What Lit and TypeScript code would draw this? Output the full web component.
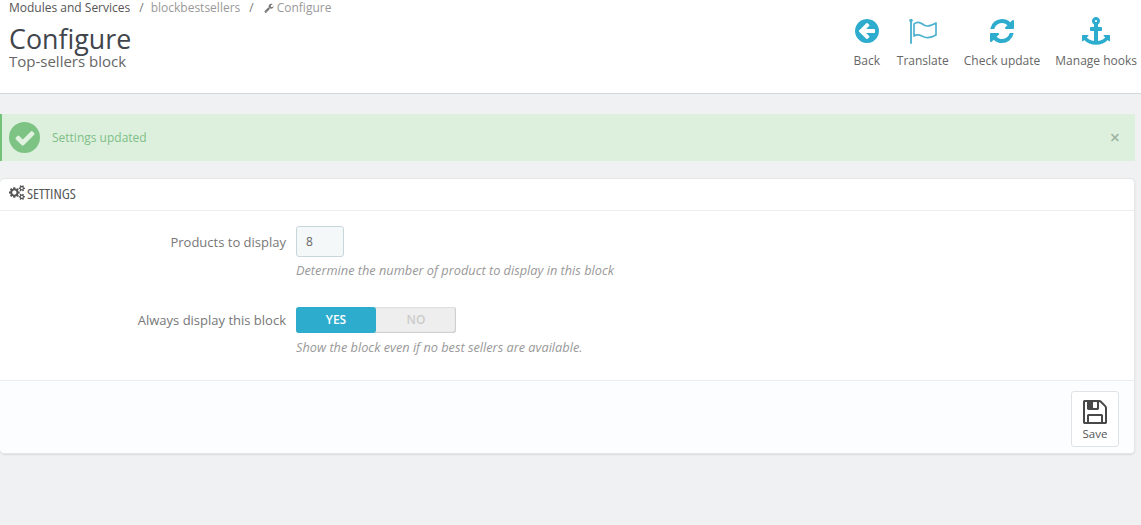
import { LitElement, html, css, svg } from "lit";
import { customElement } from "lit/decorators.js";

const ic = (d: string, cls: string, vb = "0 0 1792 1792") =>
  html`<svg class=${cls} viewBox=${vb} aria-hidden="true">${svg`<path fill="currentColor" d=${d}></path>`}</svg>`;

const BACK = "M1408 960v-128q0-26-19-45t-45-19h-502l189-189q19-19 19-45t-19-45l-91-91q-18-18-45-18t-45 18l-362 362-91 91q-18 18-18 45t18 45l91 91 362 362q18 18 45 18t45-18l91-91q18-18 18-45t-18-45l-189-189h502q26 0 45-19t19-45zm256-64q0 209-103 385.500t-279.500 279.500-385.500 103-385.500-103-279.500-279.500-103-385.500 103-385.500 279.500-279.500 385.500-103 385.500 103 279.500 279.500 103 385.500z";
const REFRESH = "M1639 1056q0 5-1 7-64 268-268 434.500t-478 166.500q-146 0-282.500-55t-243.500-157l-129 129q-19 19-45 19t-45-19-19-45v-448q0-26 19-45t45-19h448q26 0 45 19t19 45-19 45l-137 137q71 66 161 102t187 36q134 0 250-65t186-179q11-17 53-117 8-23 30-23h192q13 0 22.500 9.500t9.500 22.500zm25-800v448q0 26-19 45t-45 19h-448q-26 0-45-19t-19-45 19-45l138-138q-148-137-349-137-134 0-250 65t-186 179q-11 17-53 117-8 23-30 23h-199q-13 0-22.500-9.500t-9.500-22.500v-7q65-268 270-434.500t480-166.500q146 0 284 55.500t245 156.500l130-129q19-19 45-19t45 19 19 45z";
const ANCHOR = "M960 256q0-26-19-45t-45-19-45 19-19 45 19 45 45 19 45-19 19-45zm832 928v352q0 22-20 30-8 2-12 2-12 0-23-9l-93-93q-119 143-318.500 226.500t-429.500 83.500-429.500-83.500-318.500-226.500l-93 93q-9 9-23 9-4 0-12-2-20-8-20-30v-352q0-14 9-23t23-9h352q22 0 30 20 8 19-7 35l-100 100q67 91 189.500 153.500t271.500 82.500v-647h-192q-26 0-45-19t-19-45v-128q0-26 19-45t45-19h192v-163q-58-34-93-92.500t-35-128.500q0-106 75-181t181-75 181 75 75 181q0 70-35 128.500t-93 92.500v163h192q26 0 45 19t19 45v128q0 26-19 45t-45 19h-192v647q149-20 271.500-82.500t189.500-153.500l-100-100q-15-16-7-35 8-20 30-20h352q14 0 23 9t9 23z";
const SAVE = "M512 1536h768v-384h-768v384zm896 0h128v-896q0-14-10-38.500t-20-34.500l-281-281q-10-10-34-20t-39-10v416q0 40-28 68t-68 28h-576q-40 0-68-28t-28-68v-416h-128v1280h128v-416q0-40 28-68t68-28h832q40 0 68 28t28 68v416zm-384-928v-320q0-13-9.500-22.500t-22.500-9.500h-192q-13 0-22.500 9.500t-9.500 22.500v320q0 13 9.500 22.500t22.500 9.500h192q13 0 22.500-9.500t9.500-22.500zm640 32v928q0 40-28 68t-68 28h-1344q-40 0-68-28t-28-68v-1344q0-40 28-68t68-28h928q40 0 88 20t76 48l280 280q28 28 48 76t20 88z";
const WRENCH = "M448 1472q0-26-19-45t-45-19-45 19-19 45 19 45 45 19 45-19 19-45zm644-420l-682 682q-37 37-90 37-52 0-91-37l-106-108q-38-36-38-90 0-53 38-91l681-681q39 98 114.500 173.500t173.500 114.500zm634-435q0 39-23 106-47 134-164.500 217.500t-258.500 83.500q-185 0-316.500-131.500t-131.500-316.500 131.500-316.500 316.500-131.500q58 0 121.500 16.500t107.500 46.500q16 11 16 28t-16 28l-293 169v224l193 107q5-3 79-48.500t135.500-81 70.500-35.500q15 0 23.500 10t8.500 25z";
const CHECK = "M1671 566q0 40-28 68l-724 724-136 136q-28 28-68 28t-68-28l-136-136-362-362q-28-28-28-68t28-68l136-136q28-28 68-28t68 28l294 295 656-657q28-28 68-28t68 28l136 136q28 28 28 68z";
const COGS = "M896 896q0-106-75-181t-181-75-181 75-75 181 75 181 181 75 181-75 75-181zm768 512q0-52-38-90t-90-38-90 38-38 90q0 53 37.500 90.500t90.500 37.500 90.500-37.500 37.500-90.500zm0-1024q0-52-38-90t-90-38-90 38-38 90q0 53 37.500 90.500t90.500 37.500 90.500-37.500 37.500-90.500zm-384 421v185q0 10-7 19.500t-16 10.500l-155 24q-11 35-32 76 34 48 90 115 7 11 7 20 0 12-7 19-23 30-82.500 89.500t-78.500 59.500q-11 0-21-7l-115-90q-37 19-77 31-11 108-23 155-7 24-30 24h-186q-11 0-20-7.500t-10-17.500l-23-153q-34-10-75-31l-118 89q-7 7-20 7-11 0-21-8-144-133-144-160 0-9 7-19 10-14 41-53t47-61q-23-44-35-82l-152-24q-10-1-17-9.500t-7-19.500v-185q0-10 7-19.500t16-10.500l155-24q11-35 32-76-34-48-90-115-7-11-7-20 0-12 7-20 22-30 82-89t79-59q11 0 21 7l115 90q34-18 77-32 11-108 23-154 7-24 30-24h186q11 0 20 7.500t10 17.500l23 153q34 10 75 31l118-89q8-7 20-7 11 0 21 8 144 133 144 160 0 8-7 19-12 16-42 54t-45 60q23 48 34 82l152 23q10 2 17 10.500t7 19.500zm640 533v140q0 16-149 31-12 27-30 52 51 113 51 138 0 4-4 7-122 71-124 71-8 0-46-47t-52-68q-20 2-30 2t-30-2q-14 21-52 68t-46 47q-2 0-124-71-4-3-4-7 0-25 51-138-18-25-30-52-149-15-149-31v-140q0-16 149-31 13-29 30-52-51-113-51-138 0-4 4-7 4-2 35-20t59-34 30-16q8 0 46 46.500t52 67.500q20-2 30-2t30 2q51-71 92-112l6-2q4 0 124 70 4 3 4 7 0 25-51 138 17 23 30 52 149 15 149 31zm0-1024v140q0 16-149 31-12 27-30 52 51 113 51 138 0 4-4 7-122 71-124 71-8 0-46-47t-52-68q-20 2-30 2t-30-2q-14 21-52 68t-46 47q-2 0-124-71-4-3-4-7 0-25 51-138-18-25-30-52-149-15-149-31v-140q0-16 149-31 13-29 30-52-51-113-51-138 0-4 4-7 4-2 35-20t59-34 30-16q8 0 46 46.500t52 67.500q20-2 30-2t30 2q51-71 92-112l6-2q4 0 124 70 4 3 4 7 0 25-51 138 17 23 30 52 149 15 149 31z";

const flag = html`<svg class="tool-icon flag" viewBox="0 0 28 28" aria-hidden="true">
  <circle cx="2" cy="3.500" r="1.800" fill="currentColor"></circle>
  <path d="M2 4v22" fill="none" stroke="currentColor" stroke-width="1.900" stroke-linecap="round"></path>
  <path d="M5 7C9 4 12 6 15 8S22 9 27 6V18C22 21 18 21 15 20S9 16 5 19Z" fill="none" stroke="currentColor" stroke-width="1.700" stroke-linejoin="round"></path>
</svg>`;

@customElement("app-root")
export class AppRoot extends LitElement {
  static styles = css`
    :host {
      display: block;
      height: 525px;
      overflow: hidden;
      background: #eff1f2;
      font-family: "Open Sans", "Liberation Sans", sans-serif;
      font-size: 12px;
      color: #555;
    }
    .head {
      height: 93px;
      background: #fff;
      border-bottom: 1px solid #d3d8db;
      display: flex;
      justify-content: space-between;
      padding-left: 9px;
    }
    .crumbs {
      display: flex;
      align-items: center;
      height: 15px;
      font-size: 12px;
      line-height: 15px;
      color: #555;
    }
    .crumbs .sep { margin: 0 9px; color: #777; }
    .crumbs .sep.first { margin-right: 7px; }
    .crumbs .soft { color: #999; }
    .wrench { width: 10px; height: 10px; margin-right: 3px; color: #777; margin-left: 1px; }
    h1 {
      margin: 9px 0 0;
      font-size: 26.800px;
      line-height: 30px;
      font-weight: 400;
      color: #41454c;
    }
    .sub { font-size: 15px; line-height: 17px; margin-top: -1px; color: #666; }
    .tools {
      display: flex;
      padding-top: 17px;
      padding-right: 4px;
    }
    .tool {
      display: flex;
      flex-direction: column;
      align-items: center;
      margin-left: 15px;
      color: #666;
    }
    .tool:first-child { margin-left: 0; margin-right: 1px; }
    .tool span { font-size: 12px; line-height: 16px; margin-top: 8px; white-space: nowrap; }
    .tool-icon { display: block; width: 28px; height: 28px; color: #2eacce; }
    .flag { color: #4fb3cf; }
    .alert {
      margin: 20px 6px 0 0;
      height: 47px;
      box-sizing: border-box;
      background: #ddf0de;
      border-left: 2px solid #72c279;
      display: flex;
      align-items: center;
      color: #7fbf86;
      font-size: 12px;
    }
    .ok {
      width: 31px;
      height: 31px;
      margin-left: 7px;
      margin-right: 12px;
      border-radius: 50%;
      background: #7dc384;
      color: #dff3e0;
      display: flex;
      align-items: center;
      justify-content: center;
      flex: none;
    }
    .ok svg { width: 22px; height: 22px; }
    .msg { flex: 1; }
    .close { margin-right: 15px; color: #9db5a0; font-size: 18px; line-height: 15px; font-weight: 600; }
    .panel {
      margin: 17px 6px 0 0;
      height: 276px;
      box-sizing: border-box;
      background: #fff;
      border: 1px solid #e6e6e6;
      border-left: none;
      border-radius: 5px;
      box-shadow: 0 1px 2px rgba(0, 0, 0, 0.1);
      display: flex;
      flex-direction: column;
      overflow: hidden;
    }
    .panel-head {
      height: 32px;
      box-sizing: border-box;
      border-bottom: 1px solid #eee;
      display: flex;
      align-items: center;
      padding: 0 0 4px 9px;
      color: #555;
      font-size: 14.800px;
    }
    .panel-title { font-stretch: 75%; }
    .cogs { width: 16px; height: 15px; margin-right: 2px; color: #555; }
    .form { flex: 1; padding-top: 15px; }
    .row { display: grid; grid-template-columns: 286px 1fr; column-gap: 10px; }
    .row + .row { margin-top: 29px; }
    .row label {
      text-align: right;
      font-size: 13px;
      line-height: 32px;
      color: #777;
    }
    .row.second label { line-height: 26px; }
    .input {
      width: 48px;
      height: 31px;
      box-sizing: border-box;
      border: 1px solid #c7d6db;
      border-radius: 3px;
      background: #f5f8f9;
      padding-left: 9px;
      font-size: 12px;
      line-height: 29px;
      color: #666;
    }
    .help {
      margin-top: 5px;
      font-size: 12.750px;
      line-height: 16px;
      font-style: italic;
      color: #999;
    }
    .second .help { margin-top: 6px; }
    .switch {
      width: 160px;
      height: 26px;
      display: flex;
      border-radius: 3px;
      background: #eee;
      box-shadow: inset -1px -1px 1px #ccc, inset 0 1px 1px #ddd;
      font-size: 12px;
      font-weight: 600;
      line-height: 25px;
      text-align: center;
    }
    .yes { flex: 1; background: #2eacce; color: #fff; border-radius: 3px; }
    .no { flex: 1; color: #ccc; }
    .foot {
      height: 73px;
      box-sizing: border-box;
      background: #fcfdfe;
      border-top: 1px solid #eaedef;
      display: flex;
      justify-content: flex-end;
      padding: 10px 15px 0 0;
    }
    .save {
      width: 48px;
      height: 56px;
      box-sizing: border-box;
      border: 1px solid #e0e3e5;
      border-radius: 3px;
      background: #fff;
      display: flex;
      flex-direction: column;
      align-items: center;
      padding-top: 6px;
      color: #555;
      font-size: 11.500px;
      line-height: 14px;
    }
    .save svg { width: 28px; height: 28px; display: block; margin-bottom: 1px; color: #484848; }
  `;

  render() {
    return html`
      <header class="head">
        <div>
          <div class="crumbs">
            <span>Modules and Services</span><span class="sep first">/</span>
            <span class="soft">blockbestsellers</span><span class="sep">/</span>
            ${ic(WRENCH, "wrench")}<span class="soft">Configure</span>
          </div>
          <h1>Configure</h1>
          <div class="sub">Top-sellers block</div>
        </div>
        <div class="tools">
          <div class="tool">${ic(BACK, "tool-icon")}<span>Back</span></div>
          <div class="tool">${flag}<span>Translate</span></div>
          <div class="tool">${ic(REFRESH, "tool-icon")}<span>Check update</span></div>
          <div class="tool">${ic(ANCHOR, "tool-icon")}<span>Manage hooks</span></div>
        </div>
      </header>
      <div class="alert">
        <div class="ok">${ic(CHECK, "")}</div>
        <div class="msg">Settings updated</div>
        <div class="close">×</div>
      </div>
      <section class="panel">
        <div class="panel-head">${ic(COGS, "cogs", "0 0 1920 1792")}<span class="panel-title">SETTINGS</span></div>
        <div class="form">
          <div class="row">
            <label>Products to display</label>
            <div>
              <div class="input">8</div>
              <div class="help">Determine the number of product to display in this block</div>
            </div>
          </div>
          <div class="row second">
            <label>Always display this block</label>
            <div>
              <div class="switch"><div class="yes">YES</div><div class="no">NO</div></div>
              <div class="help">Show the block even if no best sellers are available.</div>
            </div>
          </div>
        </div>
        <div class="foot">
          <div class="save">${ic(SAVE, "")}Save</div>
        </div>
      </section>
    `;
  }
}
